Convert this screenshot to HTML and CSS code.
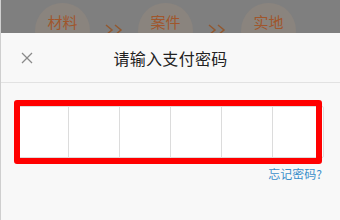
FILE: index.html
```
<!DOCTYPE html>
<html lang="zh-CN">
<head>
    <meta charset="UTF-8">
    <meta name="viewport" content="width=device-width, initial-scale=1.0">
    <title>支付密码</title>
    <link rel="stylesheet" href="styles.css">
</head>
<body>

<div class="page">
    <!-- 步骤（遮罩下面） -->
    <div class="steps">
        <div class="step"><span>材料</span></div>
        <svg class="arrow" width="18" height="12" viewBox="0 0 18 12"><polyline points="1,1 7,6 1,11" /><polyline points="10,1 16,6 10,11" /></svg>
        <div class="step"><span>案件</span></div>
        <svg class="arrow" width="18" height="12" viewBox="0 0 18 12"><polyline points="1,1 7,6 1,11" /><polyline points="10,1 16,6 10,11" /></svg>
        <div class="step"><span>实地</span></div>
    </div>

    <!-- 支付弹层 -->
    <div class="sheet">
        <div class="sheet-head">
            <svg class="close" width="12" height="12" viewBox="0 0 12 12"><line x1="1" y1="1" x2="11" y2="11" /><line x1="11" y1="1" x2="1" y2="11" /></svg>
            <div class="title">请输入支付密码</div>
        </div>

        <div class="pay">
            <div class="pwd-wrap">
                <div class="pwd-box">
                    <div class="cell"></div>
                    <div class="cell"></div>
                    <div class="cell"></div>
                    <div class="cell"></div>
                    <div class="cell"></div>
                    <div class="cell"></div>
                </div>
                <div class="mark"></div>
            </div>
            <div class="forgot"><a href="#">忘记密码?</a></div>
        </div>
    </div>
</div>

</body>
</html>
```

FILE: styles.css
```
* {
    margin: 0;
    padding: 0;
    box-sizing: border-box;
}

body {
    font-family: "Noto Sans CJK SC", "Noto Sans", sans-serif;
    background: #7f7f7f;
    width: 340px;
    height: 220px;
    overflow: hidden;
}

.page {
    height: 220px;
    border-left: 1px solid #cfcfcf;
    display: flex;
    flex-direction: column;
}

/* 步骤 */
.steps {
    height: 33px;
    overflow: hidden;
    display: flex;
    align-items: flex-start;
    padding-left: 34px;
    flex-shrink: 0;
}

.step {
    width: 55px;
    height: 55px;
    margin-top: 3px;
    border-radius: 50%;
    background: #8a847e;
    text-align: center;
    flex-shrink: 0;
}

.step span {
    display: block;
    padding-top: 8px;
    font-size: 15px;
    line-height: 22px;
    color: #a0562c;
}

.arrow {
    margin: 24px 15px 0 15px;
    flex-shrink: 0;
}

.arrow polyline {
    fill: none;
    stroke: #92582f;
    stroke-width: 1.5;
}

/* 弹层 */
.sheet {
    flex: 1;
    background: #f8f8f8;
}

.sheet-head {
    height: 50px;
    border-bottom: 1px solid #e2e2e2;
    display: flex;
    align-items: center;
    justify-content: center;
    position: relative;
}

.close {
    position: absolute;
    left: 20px;
    top: 19px;
}

.close line {
    stroke: #8a8a8a;
    stroke-width: 1.2;
}

.title {
    font-size: 16px;
    color: #222;
    letter-spacing: 0.3px;
}

.pay {
    padding: 23px 16px 0 15px;
}

.pwd-wrap {
    position: relative;
}

.pwd-box {
    display: grid;
    grid-template-columns: repeat(6, 1fr);
    height: 52px;
    background: #fff;
    border: 1px solid #dcdcdc;
    border-radius: 2px;
}

.cell {
    border-left: 1px solid #dcdcdc;
}

.cell:first-child {
    border-left: none;
}

/* 红框标注 */
.mark {
    position: absolute;
    top: -6px;
    bottom: -6px;
    left: -2px;
    right: 2px;
    border: 6px solid #ff0000;
    border-radius: 3px;
}

.forgot {
    text-align: right;
    padding-top: 6px;
    padding-right: 2px;
    line-height: 16px;
}

.forgot a {
    font-size: 12px;
    color: #3b8fca;
    text-decoration: none;
}
```
